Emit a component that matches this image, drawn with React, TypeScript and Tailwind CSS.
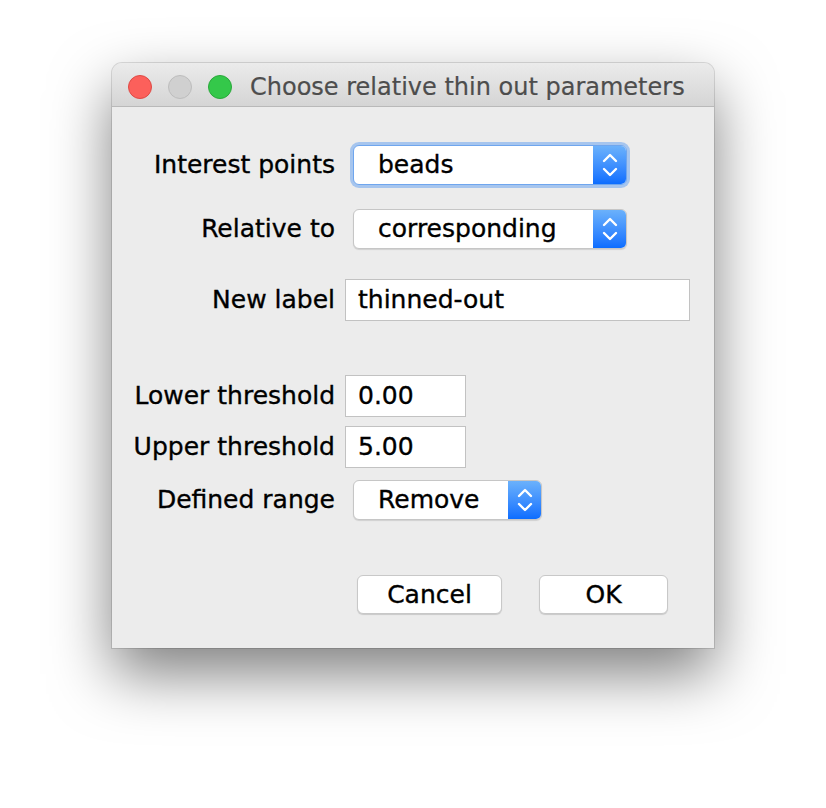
import React from 'react';

function Chevrons() {
  return (
    <svg width="18" height="28" viewBox="0 0 18 28" fill="none" stroke="white" strokeWidth="2.4" strokeLinecap="round" strokeLinejoin="round">
      <path d="M3 10 L9 4 L15 10" />
      <path d="M3 18 L9 24 L15 18" />
    </svg>
  );
}

function Popup({ value, width, focused }: { value: string; width: string; focused?: boolean }) {
  return (
    <div
      className={`${width} h-[40px] flex rounded-[6px] bg-white overflow-hidden ${
        focused
          ? 'border border-[#6fa6ee] shadow-[0_0_0_3px_rgba(110,165,240,0.55)]'
          : 'border border-[#c6c6c6] shadow-[0_1px_1px_rgba(0,0,0,0.12)]'
      }`}
    >
      <div className="flex-1 flex items-center pl-[24px] text-black">{value}</div>
      <div className="w-[33px] flex items-center justify-center bg-gradient-to-b from-[#6bb1fb] to-[#0b6dff]">
        <Chevrons />
      </div>
    </div>
  );
}

function Field({ value, width }: { value: string; width: string }) {
  return (
    <div className={`${width} h-[42px] flex items-center bg-white border border-[#c2c2c2] pl-[12px] text-black`}>
      {value}
    </div>
  );
}

function Label({ children }: { children: React.ReactNode }) {
  return <div className="w-[233px] shrink-0 text-right pr-[10px] text-black">{children}</div>;
}

export default function App() {
  return (
    <div
      className="w-[826px] h-[808px] bg-white pt-[63px] pl-[112px]"
      style={{ fontFamily: '"DejaVu Sans", "Liberation Sans", sans-serif' }}
    >
      <div className="w-[602px] h-[585px] flex flex-col rounded-t-[10px] bg-[#ececec] shadow-[0_0_0_1px_rgba(0,0,0,0.12),0_26px_60px_rgba(0,0,0,0.5)] text-[25px] [-webkit-text-stroke:0.35px_currentColor]">
        {/* Title bar */}
        <div className="h-[44px] shrink-0 flex items-center rounded-t-[10px] bg-gradient-to-b from-[#ebebeb] to-[#d5d5d5] border-b border-[#b9b9b9] pl-[16px] pt-[4px]">
          <div className="flex gap-[16px]">
            <div className="w-[24px] h-[24px] rounded-full bg-[#fc605b] border border-[#de4a45]" />
            <div className="w-[24px] h-[24px] rounded-full bg-[#d0d0d0] border border-[#bdbdbd]" />
            <div className="w-[24px] h-[24px] rounded-full bg-[#34c84a] border border-[#2aa83b]" />
          </div>
          <div className="ml-[18px] text-[#4d4d4d] text-[24px] leading-none [-webkit-text-stroke:0.2px_currentColor]">Choose relative thin out parameters</div>
        </div>

        {/* Body */}
        <div className="flex flex-col pt-[38px]">
          <div className="flex items-center">
            <Label>Interest points</Label>
            <div className="pl-[8px]">
              <Popup value="beads" width="w-[274px]" focused />
            </div>
          </div>
          <div className="flex items-center mt-[24px]">
            <Label>Relative to</Label>
            <div className="pl-[8px]">
              <Popup value="corresponding" width="w-[274px]" />
            </div>
          </div>
          <div className="flex items-center mt-[30px]">
            <Label>New label</Label>
            <Field value="thinned-out" width="w-[345px]" />
          </div>
          <div className="flex items-center mt-[54px]">
            <Label>Lower threshold</Label>
            <Field value="0.00" width="w-[121px]" />
          </div>
          <div className="flex items-center mt-[9px]">
            <Label>Upper threshold</Label>
            <Field value="5.00" width="w-[121px]" />
          </div>
          <div className="flex items-center mt-[12px]">
            <Label>Defined range</Label>
            <div className="pl-[8px]">
              <Popup value="Remove" width="w-[189px]" />
            </div>
          </div>

          <div className="flex mt-[55px] pl-[245px] gap-[37px]">
            <button className="w-[145px] h-[39px] rounded-[6px] bg-white border border-[#c8c8c8] shadow-[0_1px_1px_rgba(0,0,0,0.15)] text-black">
              Cancel
            </button>
            <button className="w-[129px] h-[39px] rounded-[6px] bg-white border border-[#c8c8c8] shadow-[0_1px_1px_rgba(0,0,0,0.15)] text-black">
              OK
            </button>
          </div>
        </div>
      </div>
    </div>
  );
}
